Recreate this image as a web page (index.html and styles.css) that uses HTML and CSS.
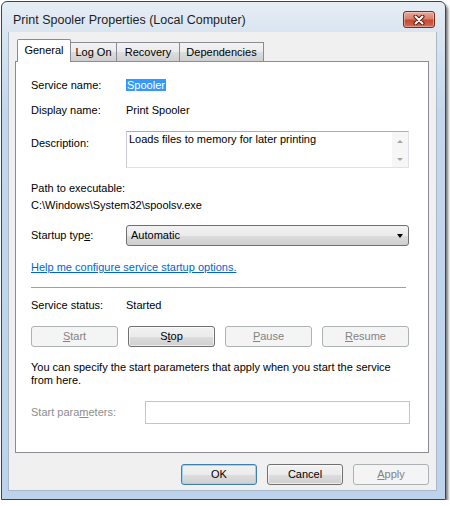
FILE: index.html
```html
<!DOCTYPE html>
<html lang="en">
<head>
  <meta charset="UTF-8" />
  <title>Print Spooler Properties (Local Computer)</title>
  <meta name="viewport" content="width=device-width, initial-scale=1" />
  <link rel="stylesheet" href="styles.css">
</head>
<body>
  <div class="window">
    <!-- Title bar -->
    <div class="titlebar">
      <span class="title">Print Spooler Properties (Local Computer)</span>
      <button class="close" aria-label="Close">
        <svg width="14" height="10" viewBox="0 0 14 10">
          <path d="M3.5 1.5 L10.5 8.5 M10.5 1.5 L3.5 8.5" stroke="#5a1a10" stroke-width="4" stroke-linecap="round"/>
          <path d="M3.5 1.5 L10.5 8.5 M10.5 1.5 L3.5 8.5" stroke="#fff" stroke-width="2" stroke-linecap="round"/>
        </svg>
      </button>
    </div>

    <div class="client">
      <!-- Tabs -->
      <div class="tabs">
        <div class="tab active t-general">General</div>
        <div class="tab t-logon">Log On</div>
        <div class="tab t-recovery">Recovery</div>
        <div class="tab t-deps">Dependencies</div>
      </div>

      <!-- General page -->
      <div class="panel">
        <div class="row r-name">
          <span class="label">Service name:</span>
          <span class="value"><span class="sel">Spooler</span></span>
        </div>
        <div class="row r-display">
          <span class="label">Display name:</span>
          <span class="value">Print Spooler</span>
        </div>
        <div class="row r-desc">
          <span class="label">Description:</span>
          <div class="textarea">
            <span class="textarea-text">Loads files to memory for later printing</span>
            <div class="scroll">
              <span class="arrow up"></span>
              <span class="arrow down"></span>
            </div>
          </div>
        </div>

        <div class="path-label">Path to executable:</div>
        <div class="path-value">C:\Windows\System32\spoolsv.exe</div>

        <div class="row r-startup">
          <span class="label">Startup typ<u>e</u>:</span>
          <div class="combo">
            <span>Automatic</span>
            <span class="combo-arrow"></span>
          </div>
        </div>

        <a class="link" href="#">Help me configure service startup options.</a>

        <div class="separator"></div>

        <div class="row r-status">
          <span class="label">Service status:</span>
          <span class="value">Started</span>
        </div>

        <div class="svc-buttons">
          <button class="btn" disabled><u>S</u>tart</button>
          <button class="btn">S<u>t</u>op</button>
          <button class="btn" disabled><u>P</u>ause</button>
          <button class="btn" disabled><u>R</u>esume</button>
        </div>

        <p class="hint">You can specify the start parameters that apply when you start the service from here.</p>

        <div class="row r-params">
          <span class="label disabled">Start para<u>m</u>eters:</span>
          <div class="input"></div>
        </div>
      </div>

      <!-- Dialog buttons -->
      <div class="dialog-buttons">
        <button class="btn default">OK</button>
        <button class="btn">Cancel</button>
        <button class="btn" disabled><u>A</u>pply</button>
      </div>
    </div>
  </div>
</body>
</html>
```

FILE: styles.css
```css
html,body{margin:0;background:#fff}
body{font-family:"Liberation Sans",Arial,sans-serif;font-size:11px;line-height:13px;color:#000}

/* window frame */
.window{margin:1px 0 0 1px;width:445px;height:499px;box-sizing:border-box;border:1px solid #3a4552;border-radius:6px 6px 0 0;
  padding:0 8px 7px 6px;
  background:linear-gradient(to bottom,#e6edf4 0,#dae5f0 30px,#c3d7ec 110px,#bcd3eb 100%);
  box-shadow:2px 3px 3px rgba(0,0,0,0.55)}
.titlebar{height:30px;display:flex;align-items:flex-start;justify-content:space-between}
.title{margin:11px 0 0 5px;font-size:12.5px;line-height:15px;color:#1e1e1e}
.close{margin:9px 2px 0 0;width:32px;height:17px;padding:0;border:1px solid #7d2a1c;border-radius:3px;
  display:flex;align-items:center;justify-content:center;
  background:linear-gradient(to bottom,#e9a99a 0,#d8806c 45%,#c44a33 55%,#d36a52 100%);
  box-shadow:inset 0 0 0 1px rgba(255,255,255,0.35)}

.client{height:459px;box-sizing:border-box;background:#f0f0f0;border:1px solid #a9b8c8;border-top:0;padding:7px 7px 0 6px}

/* tabs */
.tabs{height:22px;display:flex;align-items:flex-end;padding-left:2px;position:relative;z-index:1}
.tab{height:19px;box-sizing:border-box;border:1px solid #898c95;border-bottom:0;margin-left:-1px;
  display:flex;align-items:center;justify-content:center;
  background:linear-gradient(to bottom,#f3f3f3 0,#ebebeb 50%,#dddddd 51%,#cfcfcf 100%)}
.tab.active{height:23px;margin-bottom:-1px;margin-left:0;background:#fff;border-radius:2px 2px 0 0;padding-bottom:1px}
.t-general{width:54px}
.t-logon{width:47px}
.t-recovery{width:64px}
.t-deps{width:85px}

.panel{height:392px;box-sizing:border-box;border:1px solid #898c95;background:#fff;padding:17px 19px 0 15px}

.row{display:flex}
.label{width:95px;flex:none}
.label.disabled{color:#8d8d8d}
.sel{background:#3399ff;color:#fff;padding:0 1px}
.r-display{margin-top:12px}
.r-desc{margin-top:14px}
.r-desc .label{padding-top:6px}

.textarea{flex:1;height:37px;box-sizing:border-box;border:1px solid #dfe3e8;border-top-color:#abadb3;border-left-color:#c9ccd2;
  display:flex;justify-content:space-between;padding:1px 0 0 2px}
.scroll{width:16px;background:#f6f6f6;display:flex;flex-direction:column;justify-content:space-between;align-items:center;padding:8px 0 6px;box-sizing:border-box;margin-top:-1px}
.arrow{width:0;height:0;border-left:3px solid transparent;border-right:3px solid transparent}
.arrow.up{border-bottom:3px solid #a6a6a6}
.arrow.down{border-top:3px solid #a6a6a6}

.path-label{margin-top:14px}
.path-value{margin-top:4px}

.r-startup{margin-top:13px;align-items:center}
.combo{flex:1;height:21px;box-sizing:border-box;border:1px solid #707070;border-radius:3px;
  display:flex;align-items:center;justify-content:space-between;padding:0 5px 0 4px;
  background:linear-gradient(to bottom,#f2f2f2 0,#ebebeb 50%,#dddddd 51%,#cfcfcf 100%)}
.combo-arrow{width:0;height:0;border-left:3.5px solid transparent;border-right:3.5px solid transparent;border-top:4px solid #000}

.link{display:block;margin-top:15px;color:#0066cc;text-decoration:underline}

.separator{margin:13px 3px 0 0;height:1px;background:#a0a0a0}

.r-status{margin-top:11px}

.svc-buttons{margin-top:14px;display:grid;grid-template-columns:repeat(4,1fr);gap:10px}

.btn{height:21px;box-sizing:border-box;padding:0;font:inherit;color:#000;border:1px solid #707070;border-radius:3px;
  background:linear-gradient(to bottom,#f2f2f2 0,#ebebeb 50%,#dddddd 51%,#cfcfcf 100%);
  box-shadow:inset 0 0 0 1px rgba(255,255,255,0.6)}
.btn:disabled{color:#838383;border-color:#adb2b5;background:#f4f4f4;box-shadow:none}
.btn.default{border-color:#3c7fb1;box-shadow:inset 0 0 0 1px #9ed3f3}

.hint{margin:14px 0 0 0}

.r-params{margin-top:14px;align-items:center}
.r-params .label{width:114px}
.input{flex:1;height:23px;box-sizing:border-box;border:1px solid #c2c5ca;margin-right:-1px}

.dialog-buttons{margin-top:11px;display:flex;justify-content:flex-end;gap:10px}
.dialog-buttons .btn{width:76px}
```
